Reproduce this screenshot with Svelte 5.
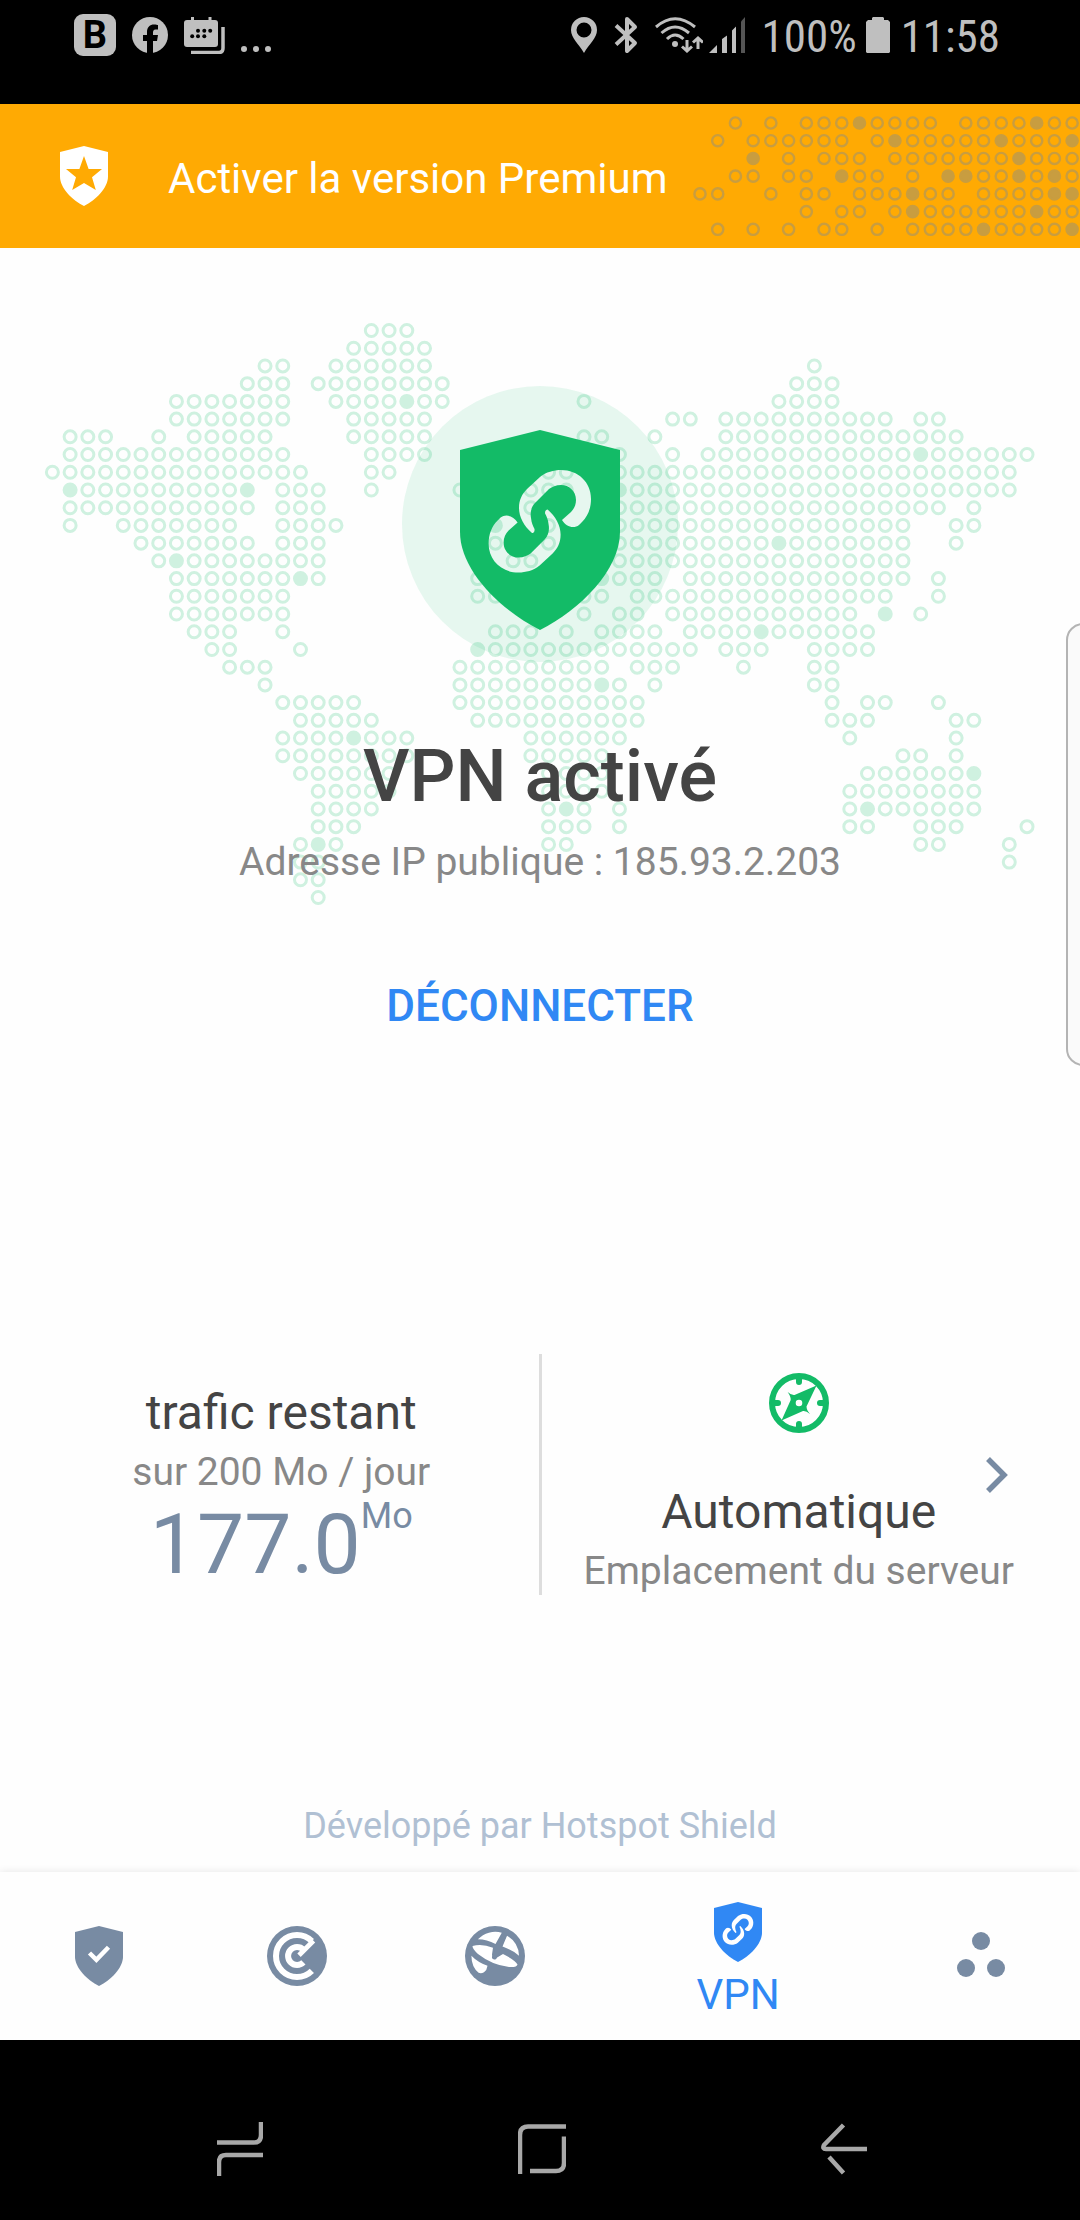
<script>
  // Each row lists grid columns: "3" is a ring, "3-7" a run of rings, "3f" a filled dot.
  const worldRows = [
    '18-20',
    '17-21',
    '12-13 16-21 43',
    '11-13 15-22 42-44',
    '7-13 16-19 20f 21-22 30 41-44',
    '7-13 17-21 35-36 38-47 49-50',
    '1-3 6 8-12 17-21 30-31 34 38-51',
    '1-13 18-21 32 35 37-48 49f 50-55',
    '0-14 18-19 28-29 32-54',
    '1f 2-10 11f 13-15 18 23 27-29 32f 33-54',
    '1-11 13-15 27 32-50 52',
    '1 4-10 13-16 25f 28 32-48 51-52',
    '5-11 13-15 25 28 32-40 41f 42-48 51',
    '6 7f 8-15 26-27 32-48',
    '7-13 14f 15 24 31f 32-34 36-48 50',
    '7-13 24-25 30-31 33-47 50',
    '7-13 30 32-33 35-45 47f 49',
    '8-10 13 25-27 29 31-34 36-39 40f 41-46',
    '9-10 14 24f 25-36 38-40 43-46',
    '10-12 23-31 33-35 39 43-44',
    '12 23-30 31f 32 34 43-44',
    '13-17 23-33 44 46-47 50',
    '14-18 24-33 44-46 51-52',
    '13-16 17f 18-20 27-32 45 51',
    '13-20 27-31 48-49 51',
    '14-19 28-31 46-51 52f',
    '15-19 28-31 45-52',
    '15-18 28 29f 30 32 45 46f 47-52',
    '15-17 28-30 32 45-46 49-51 55',
    '14 15f 16 28-29 49-50 54',
    '14-15 54',
    '14-15',
    '15'
  ];

  const bannerRows = [
    '2 4 6-8 9f 10-13 15-18 19f 20-21',
    '1 3-8 10 11f 12-16 17f 18-20 21f',
    '3f 5 7-9 11-17 18f 19-21',
    '2-3 5-6 8f 9-10 12 14f 15f 16-17 18f 19 20f 21',
    '0-1 4 6-7 9-11 12f 13-14 16-19 20f 21f',
    '6 8-9 11 12f 13-18 19f 20-21',
    '1 3 5 7-8 10 12-15 16f 17-20 21f'
  ];

  const PITCH = 17.72;

  function plot(rows, x0, y0) {
    return rows.flatMap((row, r) =>
      row.split(' ').flatMap((token) => {
        const filled = token.endsWith('f');
        const [from, to = from] = token.replace('f', '').split('-').map(Number);
        return Array.from({ length: to - from + 1 }, (_, i) => ({
          x: x0 + (from + i) * PITCH,
          y: y0 + r * PITCH,
          filled
        }));
      })
    );
  }

  const worldDots = plot(worldRows, 52.4, 8.5);
  const bannerDots = plot(bannerRows, 8, 8);

  const shieldPath = 'M80 0L0 20V102C0 140 40 180 80 200C120 180 160 140 160 102V20Z';
  const linkPath =
    'M72 103C64 96 59 87 59 78C59 70 62 64 67 59L80 47C86 42 94 40 101 40C118 40 131 52 131 69C131 78 128 86 122 92L119 95C114 99 106 97 102 90L111 82C114 79 116 75 116 70C116 61 109 55 101 55C96 55 92 57 89 59L75 73C71 77 70 83 71 88C71.500 93 73 96 74.500 99C75 102 73 103 72 103Z';
</script>

{#snippet linkShield(id)}
  <mask {id} maskUnits="userSpaceOnUse" x="0" y="0" width="160" height="200">
    <rect width="160" height="200" fill="#fff" />
    <path d={linkPath} fill="#000" />
    <path d={linkPath} fill="#000" transform="rotate(180 79.800 91.300)" />
  </mask>
  <path d={shieldPath} fill="currentColor" mask="url(#{id})" />
{/snippet}

<div class="screen">
  <header class="status">
    <div class="notifications">
      <span class="app-badge">B</span>
      <svg width="36" height="36" viewBox="0 0 36 36" aria-hidden="true">
        <circle cx="18" cy="18" r="18" fill="currentColor" />
        <path d="M15 37V24H11V18H15V15C15 10 18 7.500 22 7.500C24 7.500 25.500 8 26 8V12.500H23.500C21.500 12.500 21 14 21 15.500V18H26L25 24H21V37Z" fill="#000" />
      </svg>
      <svg width="41" height="37" viewBox="0 0 41 37" aria-hidden="true">
        <rect y="3" width="34" height="27" rx="3" fill="currentColor" />
        <path d="M8.500 0V5M26 0V5" stroke="currentColor" stroke-width="3" />
        <path d="M7 35.500H35Q39 35.500 39 31V10" fill="none" stroke="currentColor" stroke-width="3.500" />
        <g fill="#000">
          <circle cx="14" cy="13.700" r="2" /><circle cx="20.300" cy="13.700" r="2" /><circle cx="26.200" cy="13.700" r="2" />
          <circle cx="8.200" cy="19.300" r="2" /><circle cx="14" cy="19.300" r="2" /><circle cx="20.300" cy="19.300" r="2" />
        </g>
      </svg>
      <svg width="30" height="36" viewBox="0 0 30 36" aria-hidden="true">
        <g fill="currentColor"><circle cx="3" cy="32" r="3" /><circle cx="15" cy="32" r="3" /><circle cx="27" cy="32" r="3" /></g>
      </svg>
    </div>
    <div class="indicators">
      <svg width="26" height="36" viewBox="0 0 26 36" aria-hidden="true">
        <path fill-rule="evenodd" fill="currentColor" d="M13 0A13 13 0 0 0 0 13C0 21 8 27 13 36C18 27 26 21 26 13A13 13 0 0 0 13 0ZM13 5.500A7.500 7.500 0 1 1 13 20.500A7.500 7.500 0 1 1 13 5.500Z" />
      </svg>
      <svg width="24" height="38" viewBox="0 0 24 38" aria-hidden="true">
        <path d="M2 9.500L21 27L13 35V3L21 11L2 28.500" fill="none" stroke="currentColor" stroke-width="4" stroke-linejoin="round" />
      </svg>
      <svg width="48" height="36" viewBox="0 0 48 36" aria-hidden="true">
        <g fill="none" stroke="currentColor" stroke-width="3">
          <path d="M1 10Q20 -6.500 40 10" />
          <path d="M6.500 16Q20 4 34 16" />
          <path d="M12 22Q20 14 28.500 22" />
          <path d="M32 23V34M27 29.500L32 34L37 29.500M43 32V21M38 25.500L43 21L48 25.500" />
        </g>
        <circle cx="20" cy="27" r="3" fill="currentColor" />
      </svg>
      <svg class="signal" width="36" height="36" viewBox="0 0 36 36" aria-hidden="true">
        <path d="M0 36L8 28V36ZM13 36V22L18 18.500V36ZM23 36V13.500L27 9.500V36Z" fill="currentColor" />
        <path d="M32 36V4.500L36 0V36Z" fill="#555" />
      </svg>
      <span class="battery-level">100%</span>
      <svg class="battery" width="24" height="36" viewBox="0 0 24 36" aria-hidden="true">
        <path d="M6 1L7 0H17L18 1V3H22L24 5V35L23 36H1L0 35V5L2 3H6Z" fill="currentColor" />
      </svg>
      <time>11:58</time>
    </div>
  </header>

  <a class="banner" href="#premium">
    <svg class="banner-dots" width="388" height="123" viewBox="0 0 388 123" aria-hidden="true">
      {#each bannerDots as dot}
        <circle class:filled={dot.filled} cx={dot.x} cy={dot.y} r="5.600" />
      {/each}
    </svg>
    <svg width="48" height="60" viewBox="0 0 48 60" aria-hidden="true">
      <path fill-rule="evenodd" fill="currentColor" d="M24 0L0 6V30.600C0 42 12 54 24 60C36 54 48 42 48 30.600V6ZM24 10L28.600 23H42L32 31.300L35.800 44L24 37L12.200 44L16 31.300L6 23H19.400Z" />
    </svg>
    <span class="banner-label">Activer la version Premium</span>
  </a>

  <main>
    <svg class="world" viewBox="0 0 1080 584" aria-hidden="true">
      {#each worldDots as dot}
        <circle class:filled={dot.filled} cx={dot.x} cy={dot.y} r="6" />
      {/each}
    </svg>

    <section class="hero">
      <svg class="emblem" width="276" height="276" viewBox="0 0 276 276" aria-hidden="true">
        <circle cx="138" cy="138" r="138" fill="currentColor" opacity="0.100" />
        <g transform="translate(58 44)">{@render linkShield('hero-link')}</g>
      </svg>
      <h1>VPN activé</h1>
      <p class="address">Adresse IP publique : 185.93.2.203</p>
      <button class="disconnect" type="button">DÉCONNECTER</button>
    </section>

    <section class="stats">
      <div class="stat">
        <span class="title">trafic restant</span>
        <span class="caption">sur 200 Mo / jour</span>
        <span class="amount">177.0<small>Mo</small></span>
      </div>
      <div class="divider"></div>
      <button class="stat server" type="button">
        <svg class="compass" width="60" height="60" viewBox="0 0 60 60" aria-hidden="true">
          <circle cx="30" cy="30" r="27" fill="none" stroke="currentColor" stroke-width="6" />
          <path d="M30 5V9M30 55V51M5 30H9M55 30H51" stroke="currentColor" stroke-width="6" stroke-linecap="round" />
          <path fill-rule="evenodd" fill="currentColor" d="M47.500 12.500L37.500 33.500Q37.500 37 41 41Q37 37.500 34 38L12.500 47.500L21.700 27Q22 23.500 18.600 19Q22.500 22.500 25.500 22ZM30 26.700A3.300 3.300 0 1 0 30 33.300A3.300 3.300 0 1 0 30 26.700Z" />
        </svg>
        <span class="title">Automatique</span>
        <span class="caption">Emplacement du serveur</span>
        <svg class="chevron" width="22" height="36" viewBox="0 0 22 36" aria-hidden="true">
          <path d="M2 2L18 18L2 34" fill="none" stroke="currentColor" stroke-width="5.500" />
        </svg>
      </button>
    </section>

    <p class="credit">Développé par Hotspot Shield</p>
  </main>

  <nav class="tabs" aria-label="Sections">
    <a href="#protection" aria-label="Protection">
      <svg width="48" height="60" viewBox="0 0 48 60" aria-hidden="true">
        <path d="M24 0L0 6V30.600C0 42 12 54 24 60C36 54 48 42 48 30.600V6Z" fill="currentColor" />
        <path d="M14.500 27L21.400 33.800L33.500 21.300" fill="none" stroke="#fff" stroke-width="4.500" />
      </svg>
    </a>
    <a href="#scan" aria-label="Analyse">
      <svg width="60" height="60" viewBox="0 0 60 60" aria-hidden="true">
        <circle cx="30" cy="30" r="30" fill="currentColor" />
        <g fill="none" stroke="#fff">
          <path d="M44.850 15.150A21 21 0 1 0 44.850 44.850M36.400 23.600A9 9 0 1 0 36.400 36.400" stroke-width="6" />
          <path d="M46.500 14.800L32 29.300" stroke-width="4.800" />
        </g>
      </svg>
    </a>
    <a href="#web" aria-label="Protection Web">
      <svg width="60" height="60" viewBox="0 0 60 60" aria-hidden="true">
        <circle cx="30" cy="30" r="30" fill="currentColor" />
        <path
          fill="#fff"
          d="M12.900 13.300A24 24 0 0 1 36.800 6.700L30.500 18Q22 13.500 12.900 13.300ZM42 9.700A24 24 0 0 1 54 29.700Q49 25 40.500 21.700L37.500 20.500ZM7.500 20Q17 17.500 28 21.700L27 28.500Q27 31 31.500 31.800L33 31L38 28Q50 34 52.500 38.500Q52 41.500 44 41Q27 39 13 28Q7.500 23 7.500 20ZM6.400 29.700Q13 36.500 22.500 39.700Q22 44 19 46.300Q16 47.800 13.600 46.700Q6.500 41 6.400 29.700Z"
        />
        <path d="M39.500 8L29.500 31" stroke="currentColor" stroke-width="5" stroke-linecap="round" />
      </svg>
    </a>
    <a class="active" href="#vpn" aria-current="page">
      <svg width="48" height="60" viewBox="0 0 160 200" aria-hidden="true">{@render linkShield('tab-link')}</svg>
      <span>VPN</span>
    </a>
    <a href="#more" aria-label="Plus">
      <svg width="48" height="48" viewBox="0 0 48 48" aria-hidden="true">
        <g fill="currentColor"><circle cx="24" cy="9" r="9" /><circle cx="9" cy="36" r="9" /><circle cx="39" cy="36" r="9" /></g>
      </svg>
    </a>
  </nav>

  <footer class="system">
    <button type="button" aria-label="Applications récentes">
      <svg width="46" height="54" viewBox="0 0 46 54" aria-hidden="true">
        <path d="M44 0V13Q44 20.500 37 20.500H0M46 33H9Q2 33 2 40V54" />
      </svg>
    </button>
    <button type="button" aria-label="Accueil">
      <svg width="48" height="50" viewBox="0 0 48 50" aria-hidden="true">
        <path d="M48 2.500H10Q2 2.500 2 11V50M46 12.500V39Q46 47 38 47H12" />
      </svg>
    </button>
    <button type="button" aria-label="Retour">
      <svg width="46" height="52" viewBox="0 0 46 52" aria-hidden="true">
        <path d="M22.500 2L3 22Q1 26 5 26H46M8 34L22.500 50" />
      </svg>
    </button>
  </footer>

  <div class="edge-handle"></div>
</div>

<style>
  :global(body) {
    margin: 0;
    background: #000;
  }

  .screen {
    position: relative;
    display: flex;
    flex-direction: column;
    min-height: 100vh;
    overflow: hidden;
    background: #fefefe;
    font-family: Roboto, 'Liberation Sans', sans-serif;
  }

  svg {
    display: block;
    flex: none;
  }

  h1,
  p {
    margin: 0;
  }

  a {
    color: inherit;
    text-decoration: none;
  }

  button {
    padding: 0;
    border: 0;
    background: none;
    color: inherit;
    font: inherit;
    cursor: pointer;
  }

  .status {
    display: flex;
    align-items: center;
    justify-content: space-between;
    box-sizing: border-box;
    height: 104px;
    padding: 0 80px 34px 74px;
    background: #000;
    color: #bfbfbf;
    font-family: 'Roboto Condensed', 'Liberation Sans Narrow', Roboto, sans-serif;
    font-size: 45px;
    line-height: 52px;
  }

  .notifications,
  .indicators {
    display: flex;
    align-items: center;
    gap: 16px;
  }

  .indicators {
    gap: 17px;
  }

  .battery-level,
  time {
    padding-top: 4px;
  }

  .app-badge {
    width: 42px;
    height: 42px;
    border-radius: 9px;
    background: #bfbfbf;
    color: #000;
    font: 700 38px/42px Roboto, sans-serif;
    text-align: center;
  }

  .signal {
    margin-left: -11px;
  }

  .battery {
    margin: 0 -6px 0 -8px;
  }

  .banner {
    position: relative;
    display: flex;
    align-items: center;
    gap: 60px;
    height: 144px;
    padding: 0 60px;
    background: #ffaa03;
    color: #fff;
    font-size: 42px;
    line-height: 50px;
  }

  .banner-label {
    padding-top: 6px;
  }

  .banner-dots {
    position: absolute;
    top: 11px;
    right: 0;
  }

  .banner-dots circle {
    fill: none;
    stroke: #c89d40;
    stroke-width: 2.400;
  }

  .banner-dots .filled {
    fill: #c89d40;
  }

  main {
    position: relative;
    display: flex;
    flex: 1;
    flex-direction: column;
    color: #444;
  }

  .world {
    position: absolute;
    top: 74px;
    left: 0;
    width: 100%;
  }

  .world circle {
    fill: none;
    stroke: #cff1e0;
    stroke-width: 3;
  }

  .world .filled {
    fill: #cff1e0;
  }

  .hero {
    position: relative;
    display: flex;
    flex-direction: column;
    align-items: center;
    padding-top: 138px;
    text-align: center;
  }

  .emblem,
  .compass {
    color: #13bb67;
  }

  h1 {
    margin-top: 73px;
    font-size: 72px;
    font-weight: 500;
    line-height: 84px;
  }

  .address,
  .caption {
    color: #888;
    font-size: 39px;
    line-height: 46px;
  }

  .address {
    margin-top: 20px;
  }

  .disconnect {
    margin-top: 96px;
    color: #3088f4;
    font-size: 44px;
    font-weight: 500;
    line-height: 50px;
  }

  .stats {
    display: grid;
    grid-template-columns: 1fr 3px 1fr;
    margin-top: auto;
    padding: 0 24px;
  }

  .divider {
    background: #ddd;
  }

  .stat {
    position: relative;
    display: flex;
    flex-direction: column;
    align-items: center;
    justify-content: flex-end;
    box-sizing: border-box;
    min-height: 241px;
    padding-bottom: 1px;
  }

  .title {
    margin-bottom: 8px;
    font-size: 48px;
    line-height: 56px;
  }

  .amount {
    display: flex;
    align-items: flex-start;
    color: #788ba3;
    font-size: 84px;
    line-height: 99px;
  }

  .amount small {
    font-size: 36px;
    line-height: 42px;
  }

  .compass {
    margin-bottom: 51px;
  }

  .chevron {
    position: absolute;
    top: 50%;
    right: 48px;
    margin-top: -18px;
    color: #788ba3;
  }

  .credit {
    margin-top: 210px;
    padding-bottom: 25px;
    color: #b0c0d3;
    font-size: 36px;
    line-height: 42px;
    text-align: center;
  }

  .tabs {
    position: relative;
    display: grid;
    grid-template-columns: 1fr 1fr 1fr 288px 1fr;
    height: 168px;
    background: #fefefe;
    box-shadow: 0 0 8px rgba(0, 0, 0, 0.1);
    color: #788ba3;
  }

  .tabs a {
    display: flex;
    flex-direction: column;
    align-items: center;
    justify-content: center;
  }

  .tabs .active {
    gap: 8px;
    padding-top: 10px;
    color: #3088f4;
    font-size: 42px;
    line-height: 50px;
  }

  .system {
    position: relative;
    display: grid;
    grid-template-columns: repeat(3, 1fr);
    box-sizing: border-box;
    height: 180px;
    padding: 38px 85px 0 89px;
    background: #000;
  }

  .system button {
    display: grid;
    place-items: center;
  }

  .system path {
    fill: none;
    stroke: #a8a8a8;
    stroke-width: 4.500;
  }

  .edge-handle {
    position: absolute;
    top: 623px;
    right: -20px;
    box-sizing: border-box;
    width: 34px;
    height: 443px;
    border: 2px solid #b4b4b4;
    border-radius: 20px;
    background: #fafafa;
  }
</style>
